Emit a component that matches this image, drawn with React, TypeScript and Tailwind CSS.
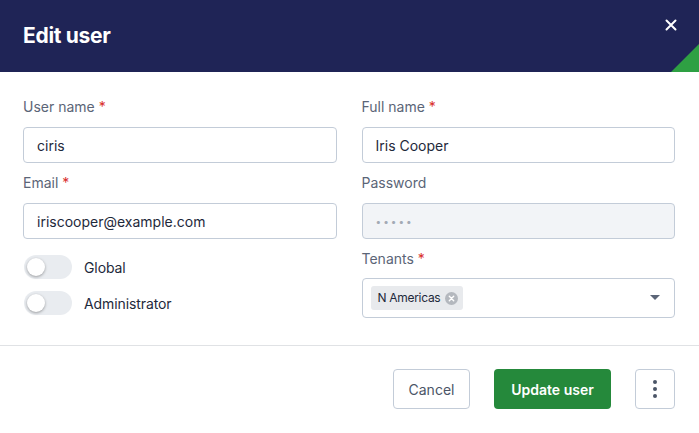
import React from "react";

function Label({ text, required }: { text: string; required?: boolean }) {
  return (
    <div className="h-[20px] text-[14px] leading-[20px] text-[#5b6577]">
      {text}
      {required && <span className="ml-[4px] text-[#d9302c]">*</span>}
    </div>
  );
}

function TextInput({ value }: { value: string }) {
  return (
    <div className="mt-[10px] flex h-[36px] items-center rounded-[4px] border border-[#c3ccd8] bg-white px-[13px] text-[14px] text-[#1e293b]">
      {value}
    </div>
  );
}

function Toggle({ label }: { label: string }) {
  return (
    <div className="flex h-[24px] items-center">
      <div className="relative h-[24px] w-[48px] rounded-full bg-[#e9ecf0]">
        <div className="absolute left-[3px] top-[3px] h-[18px] w-[18px] rounded-full bg-white shadow-[0_1px_3px_rgba(0,0,0,0.35)]" />
      </div>
      <span className="ml-[12px] text-[14px] tracking-[-0.1px] text-[#1e293b]">{label}</span>
    </div>
  );
}

export default function App() {
  return (
    <div
      className="flex h-[433px] w-[699px] flex-col bg-white"
      style={{ fontFamily: "Inter, 'Noto Sans', sans-serif" }}
    >
      {/* Header band */}
      <div className="relative flex h-[72px] items-center justify-between overflow-hidden bg-[#1f2456] pl-[23px] pr-[22px]">
        <h1 className="text-[21px] font-bold tracking-[-0.3px] text-white">Edit user</h1>
        <svg
          className="-mt-[22px]"
          width="12"
          height="12"
          viewBox="0 0 12 12"
          fill="none"
          stroke="white"
          strokeWidth="2"
          strokeLinecap="round"
        >
          <path d="M1.5 1.5 L10.5 10.5 M10.5 1.5 L1.5 10.5" />
        </svg>
        <svg className="absolute bottom-0 right-0" width="28" height="28" viewBox="0 0 28 28">
          <polygon points="28,0 28,28 0,28" fill="#2ea043" />
        </svg>
      </div>

      {/* Form body */}
      <div className="grid grid-cols-2 gap-x-[25px] pl-[23px] pr-[24px] pt-[25px]">
        <div className="flex flex-col">
          <Label text="User name" required />
          <TextInput value="ciris" />
          <div className="mt-[10px]">
            <Label text="Email" required />
          </div>
          <TextInput value="iriscooper@example.com" />
          <div className="mt-[16px] flex flex-col gap-[12px] pl-[1px]">
            <Toggle label="Global" />
            <Toggle label="Administrator" />
          </div>
        </div>
        <div className="flex flex-col">
          <Label text="Full name" required />
          <TextInput value="Iris Cooper" />
          <div className="mt-[10px]">
            <Label text="Password" />
          </div>
          <div className="mt-[10px] flex h-[36px] items-center rounded-[4px] border border-[#c3ccd8] bg-[#f2f4f7] px-[13px] text-[10px] tracking-[2px] text-[#a3aab5]">
            •••••
          </div>
          <div className="mt-[10px]">
            <Label text="Tenants" required />
          </div>
          <div className="mt-[9px] flex h-[40px] items-center justify-between rounded-[4px] border border-[#c3ccd8] bg-white pl-[8px] pr-[14px]">
            <div className="flex h-[24px] items-center gap-[5px] rounded-[3px] bg-[#e8eaed] pl-[7px] pr-[5px] text-[12px] tracking-[-0.3px] text-[#1e293b]">
              N Americas
              <svg width="13" height="13" viewBox="0 0 13 13">
                <circle cx="6.5" cy="6.5" r="6.5" fill="#b4b8be" />
                <path d="M4.3 4.3 L8.7 8.7 M8.7 4.3 L4.3 8.7" stroke="white" strokeWidth="1.4" strokeLinecap="round" />
              </svg>
            </div>
            <svg width="10" height="6" viewBox="0 0 10 6">
              <polygon points="0,0 10,0 5,5" fill="#5b6577" />
            </svg>
          </div>
        </div>
      </div>

      {/* Divider + footer */}
      <div className="mt-[27px] border-t border-[#e0e2e5]" />
      <div className="flex justify-end gap-[24px] pr-[24px] pt-[23px]">
        <button className="h-[40px] w-[77px] rounded-[4px] border border-[#c3ccd8] bg-white text-[14px] text-[#4b5567]">
          Cancel
        </button>
        <button className="h-[40px] w-[117px] rounded-[4px] bg-[#25893b] text-[14px] font-semibold text-white">
          Update user
        </button>
        <button className="flex h-[40px] w-[40px] flex-col items-center justify-center gap-[3px] rounded-[4px] border border-[#c3ccd8] bg-white">
          <span className="h-[4px] w-[4px] rounded-full bg-[#4b5567]" />
          <span className="h-[4px] w-[4px] rounded-full bg-[#4b5567]" />
          <span className="h-[4px] w-[4px] rounded-full bg-[#4b5567]" />
        </button>
      </div>
    </div>
  );
}
